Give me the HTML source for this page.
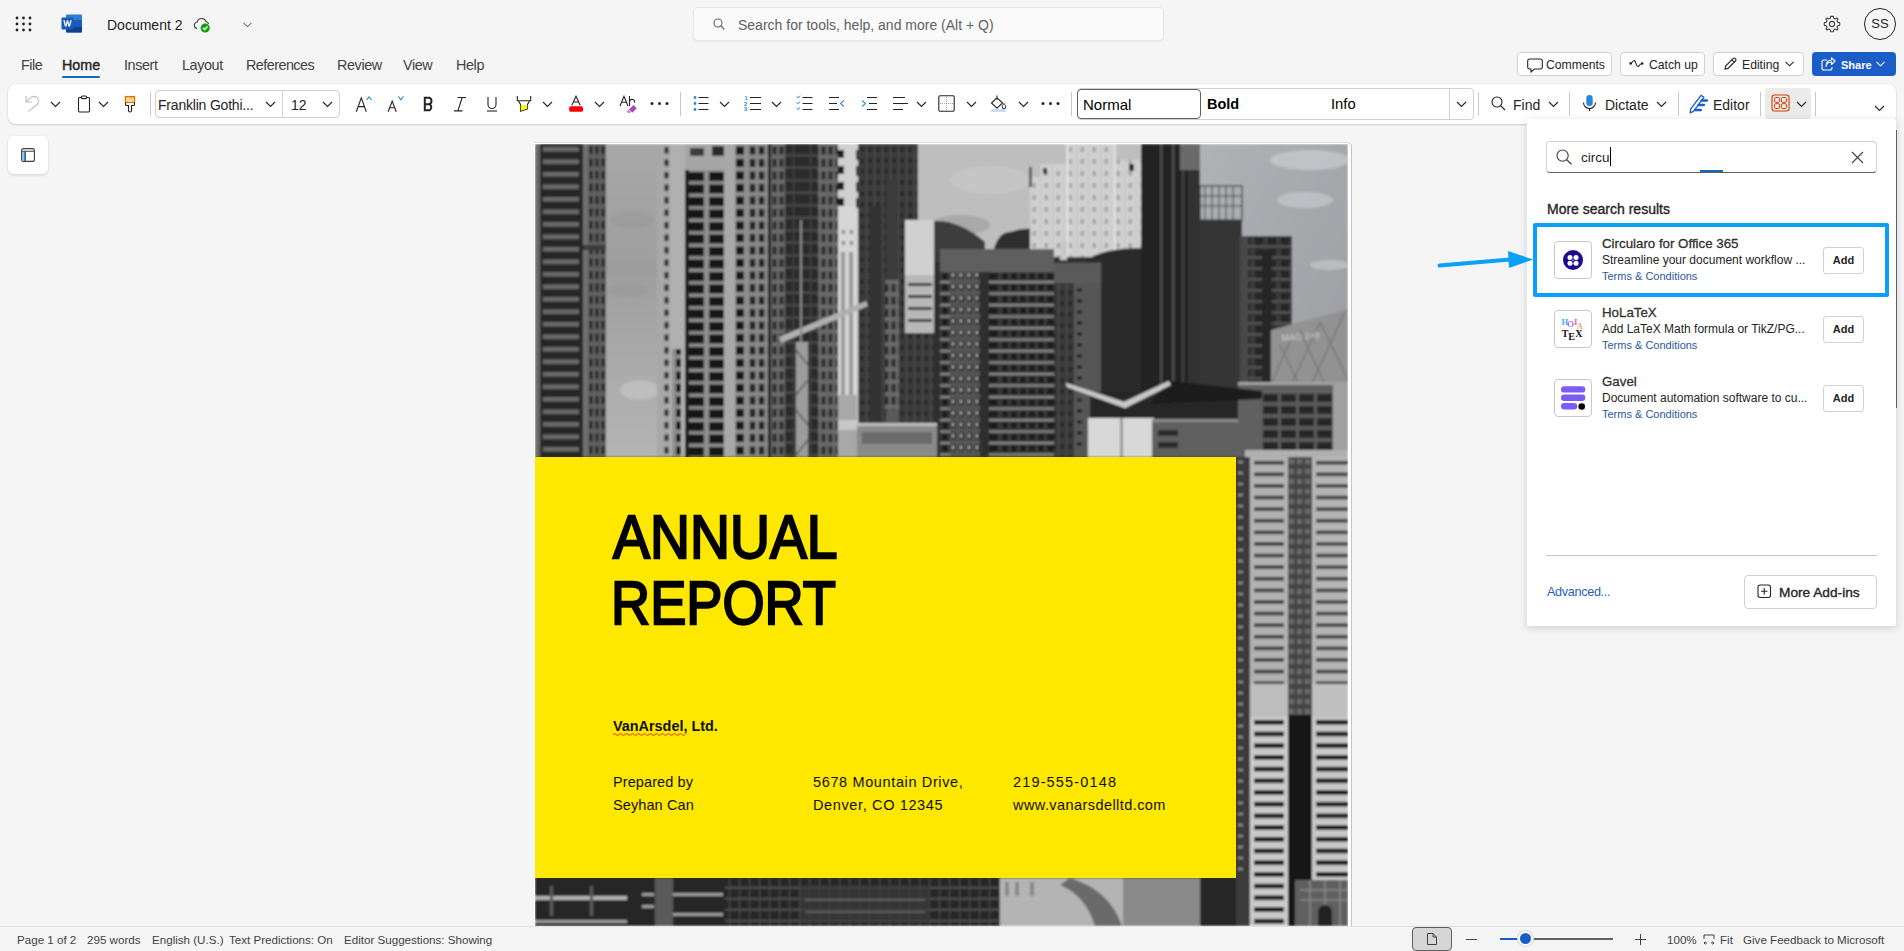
<!DOCTYPE html>
<html><head><meta charset="utf-8">
<style>
*{box-sizing:border-box;margin:0;padding:0}
html,body{width:1904px;height:951px;overflow:hidden;background:#f5f5f5;font-family:"Liberation Sans",sans-serif;color:#242424}
.a{position:absolute;white-space:nowrap}
svg{display:block}
.btn{position:absolute;border:1px solid #d1d1d1;border-radius:4px;background:#fff}
.chev{position:absolute}
</style></head><body>

<!-- ===== TITLE BAR ===== -->
<svg class="a" style="left:15px;top:16px" width="17" height="16" viewBox="0 0 17 16">
 <g fill="#242424">
  <circle cx="2" cy="2" r="1.4"/><circle cx="8.5" cy="2" r="1.4"/><circle cx="15" cy="2" r="1.4"/>
  <circle cx="2" cy="8" r="1.4"/><circle cx="8.5" cy="8" r="1.4"/><circle cx="15" cy="8" r="1.4"/>
  <circle cx="2" cy="14" r="1.4"/><circle cx="8.5" cy="14" r="1.4"/><circle cx="15" cy="14" r="1.4"/>
 </g>
</svg>
<svg class="a" style="left:61px;top:14px" width="22" height="19" viewBox="0 0 22 19">
 <rect x="5" y="0.5" width="16" height="18" rx="1" fill="#2b7cd3"/>
 <rect x="5" y="6" width="16" height="6.5" fill="#185abd"/>
 <rect x="5" y="12.5" width="16" height="6" rx="1" fill="#103f91"/>
 <rect x="0.5" y="3.5" width="12" height="12" rx="1" fill="#185abd"/>
 <path d="M2.3 6.3 L3.9 12.6 L5.6 12.6 L6.5 8.8 L7.4 12.6 L9.1 12.6 L10.7 6.3 L9.3 6.3 L8.2 10.8 L7.2 6.3 L5.8 6.3 L4.8 10.8 L3.7 6.3Z" fill="#fff"/>
</svg>
<div class="a" style="left:107px;top:17px;font-size:14px;line-height:17px">Document 2</div>
<svg class="a" style="left:193px;top:16px" width="18" height="17" viewBox="0 0 18 17">
 <path d="M4 12.5 A3.3 3.3 0 0 1 4.2 6 A4.6 4.6 0 0 1 13 5.5 A3 3 0 0 1 15.5 8" fill="none" stroke="#424242" stroke-width="1.1"/>
 <circle cx="12.2" cy="12" r="4.6" fill="#13a10e"/>
 <path d="M10 12 L11.6 13.5 L14.5 10.5" fill="none" stroke="#fff" stroke-width="1.3"/>
</svg>
<svg class="a" style="left:243px;top:22px" width="9" height="6" viewBox="0 0 9 6"><path d="M0.5 0.8 L4.5 4.8 L8.5 0.8" fill="none" stroke="#424242" stroke-width="1"/></svg>

<div class="a" style="left:694px;top:8px;width:469px;height:32px;background:#fafafa;border-radius:4px;box-shadow:0 0 0 1px #e6e6e6,0 1px 2px rgba(0,0,0,.12)"></div>
<svg class="a" style="left:713px;top:18px" width="12" height="12" viewBox="0 0 12 12"><circle cx="5" cy="5" r="4" fill="none" stroke="#616161" stroke-width="1.1"/><path d="M8 8 L11.3 11.3" stroke="#616161" stroke-width="1.2"/></svg>
<div class="a" style="left:738px;top:17px;font-size:14px;line-height:17px;color:#616161">Search for tools, help, and more (Alt + Q)</div>

<svg class="a" style="left:1823px;top:15px" width="18" height="18" viewBox="0 0 18 18">
 <path d="M9 1.2 L10.4 1.4 L10.8 3.3 L12.3 4 L13.9 2.9 L15.1 4.1 L14 5.7 L14.7 7.2 L16.6 7.6 L16.8 9 L16.6 10.4 L14.7 10.8 L14 12.3 L15.1 13.9 L13.9 15.1 L12.3 14 L10.8 14.7 L10.4 16.6 L9 16.8 L7.6 16.6 L7.2 14.7 L5.7 14 L4.1 15.1 L2.9 13.9 L4 12.3 L3.3 10.8 L1.4 10.4 L1.2 9 L1.4 7.6 L3.3 7.2 L4 5.7 L2.9 4.1 L4.1 2.9 L5.7 4 L7.2 3.3 L7.6 1.4Z" fill="none" stroke="#424242" stroke-width="1.1" stroke-linejoin="round"/>
 <circle cx="9" cy="9" r="2.6" fill="none" stroke="#424242" stroke-width="1.1"/>
</svg>
<div class="a" style="left:1864px;top:8px;width:32px;height:32px;border:1px solid #242424;border-radius:50%;font-size:13px;line-height:30px;text-align:center">SS</div>

<!-- ===== MENU ROW ===== -->
<div class="a" style="left:21px;top:57px;font-size:14.4px;line-height:16px;color:#424242;letter-spacing:-0.5px">File</div>
<div class="a" style="left:62px;top:57px;font-size:14.3px;line-height:16px;color:#242424;-webkit-text-stroke:0.4px #242424">Home</div>
<div class="a" style="left:62px;top:76px;width:38px;height:2px;background:#0f6cbd;border-radius:1px"></div>
<div class="a" style="left:124px;top:57px;font-size:14.4px;line-height:16px;color:#424242;letter-spacing:-0.4px">Insert</div>
<div class="a" style="left:182px;top:57px;font-size:14.4px;line-height:16px;color:#424242;letter-spacing:-0.4px">Layout</div>
<div class="a" style="left:246px;top:57px;font-size:14.4px;line-height:16px;color:#424242;letter-spacing:-0.55px">References</div>
<div class="a" style="left:337px;top:57px;font-size:14.4px;line-height:16px;color:#424242;letter-spacing:-0.4px">Review</div>
<div class="a" style="left:403px;top:57px;font-size:14.4px;line-height:16px;color:#424242;letter-spacing:-0.4px">View</div>
<div class="a" style="left:456px;top:57px;font-size:14.4px;line-height:16px;color:#424242;letter-spacing:-0.4px">Help</div>

<!-- top right buttons -->
<div class="btn" style="left:1517px;top:52px;width:95px;height:24px"></div>
<svg class="a" style="left:1527px;top:58px" width="16" height="15" viewBox="0 0 16 15"><path d="M2.5 1 H13.5 A1.8 1.8 0 0 1 15.3 2.8 V9.2 A1.8 1.8 0 0 1 13.5 11 H7.5 L4 14 V11 H2.5 A1.8 1.8 0 0 1 0.7 9.2 V2.8 A1.8 1.8 0 0 1 2.5 1Z" fill="none" stroke="#242424" stroke-width="1.1"/></svg>
<div class="a" style="left:1546px;top:58px;font-size:12.2px;line-height:15px">Comments</div>
<div class="btn" style="left:1620px;top:52px;width:85px;height:24px"></div>
<svg class="a" style="left:1629px;top:59px" width="15" height="10" viewBox="0 0 15 10"><path d="M1.5 4.5 C3 4.5 4 1 5.5 1.5 C7 2.5 7 8 9 7.5 C10.5 7 11 4.5 13.2 4.5" fill="none" stroke="#242424" stroke-width="1.1"/><circle cx="1.6" cy="4.5" r="1.3" fill="#242424"/><circle cx="13.2" cy="4.5" r="1.3" fill="#242424"/></svg>
<div class="a" style="left:1649px;top:58px;font-size:12.2px;line-height:15px">Catch up</div>
<div class="btn" style="left:1713px;top:52px;width:91px;height:24px"></div>
<svg class="a" style="left:1723px;top:57px" width="14" height="14" viewBox="0 0 14 14"><path d="M2 12 L2.6 9 L10 1.6 A1.4 1.4 0 0 1 12.4 4 L5 11.4 Z M8.8 2.8 L11.2 5.2" fill="none" stroke="#242424" stroke-width="1.1"/></svg>
<div class="a" style="left:1742px;top:58px;font-size:12.2px;line-height:15px">Editing</div>
<svg class="a" style="left:1785px;top:61px" width="9" height="6" viewBox="0 0 9 6"><path d="M0.5 0.8 L4.5 4.8 L8.5 0.8" fill="none" stroke="#242424" stroke-width="1.1"/></svg>
<div class="a" style="left:1812px;top:52px;width:84px;height:24px;background:#0f5cc0;border-radius:4px;background:#1a5dc7"></div>
<svg class="a" style="left:1821px;top:57px" width="15" height="14" viewBox="0 0 15 14"><path d="M6 3 H3 A2 2 0 0 0 1 5 V11 A2 2 0 0 0 3 13 H9 A2 2 0 0 0 11 11 V10" fill="none" stroke="#fff" stroke-width="1.1"/><path d="M5 9.5 C5.5 6.5 7.5 5 10.5 5 V7.5 L14 4 L10.5 0.8 V3 C7 3 5 5.5 5 9.5Z" fill="none" stroke="#fff" stroke-width="1.1" stroke-linejoin="round"/></svg>
<div class="a" style="left:1841px;top:58px;font-size:11px;line-height:15px;color:#fff;font-weight:bold">Share</div>
<svg class="a" style="left:1876px;top:61px" width="9" height="6" viewBox="0 0 9 6"><path d="M0.5 0.8 L4.5 4.8 L8.5 0.8" fill="none" stroke="#fff" stroke-width="1.1"/></svg>

<!-- ===== RIBBON ===== -->
<div class="a" style="left:8px;top:84px;width:1888px;height:40px;background:#fff;border-radius:8px;box-shadow:0 1px 2px rgba(0,0,0,.14),0 0 2px rgba(0,0,0,.10)"></div>
<!-- undo/clipboard/brush -->
<svg class="a" style="left:25px;top:95px" width="15" height="18" viewBox="0 0 15 18"><path d="M1 1 V7 H7" fill="none" stroke="#bdbdbd" stroke-width="1.1"/><path d="M1.3 6.7 L5.5 2.8 A4.6 4.6 0 0 1 12.3 9.3 L3.2 16.6" fill="none" stroke="#bdbdbd" stroke-width="1.1"/></svg>
<svg class="a" style="left:50px;top:101px" width="11" height="7" viewBox="0 0 11 7"><path d="M1 1 L5.5 5.5 L10 1" fill="none" stroke="#242424" stroke-width="1.1"/></svg>
<svg class="a" style="left:77px;top:95px" width="14" height="18" viewBox="0 0 14 18"><rect x="1.5" y="2.5" width="11" height="14.5" rx="1.3" fill="none" stroke="#242424" stroke-width="1.1"/><rect x="4.3" y="1" width="5.4" height="2.6" rx="1.3" fill="#fff" stroke="#242424" stroke-width="1.1"/></svg>
<svg class="a" style="left:98px;top:101px" width="11" height="7" viewBox="0 0 11 7"><path d="M1 1 L5.5 5.5 L10 1" fill="none" stroke="#242424" stroke-width="1.1"/></svg>
<svg class="a" style="left:124px;top:95px" width="12" height="18" viewBox="0 0 12 18"><rect x="1.5" y="1.5" width="9" height="6" fill="#f8dc98" stroke="#e86c00" stroke-width="1.2"/><path d="M7 1.5 V3.5 M9 1.5 V3" stroke="#e86c00" stroke-width="0.9"/><path d="M1.5 7.5 V9.5 A1 1 0 0 0 2.5 10.5 H4.5 V15.5 A1.5 1.5 0 0 0 7.5 15.5 V10.5 H9.5 A1 1 0 0 0 10.5 9.5 V7.5" fill="none" stroke="#242424" stroke-width="1.1"/></svg>
<div class="a" style="left:150px;top:92px;width:1px;height:24px;background:#c8c8c8"></div>
<!-- font box -->
<div class="a" style="left:155px;top:90px;width:185px;height:28px;border:1px solid #d1d1d1;border-radius:4px"></div>
<div class="a" style="left:282px;top:91px;width:1px;height:26px;background:#d1d1d1"></div>
<div class="a" style="left:158px;top:97px;font-size:14px;line-height:17px;color:#242424;letter-spacing:-0.2px">Franklin Gothi...</div>
<svg class="a" style="left:265px;top:101px" width="11" height="7" viewBox="0 0 11 7"><path d="M1 1 L5.5 5.5 L10 1" fill="none" stroke="#242424" stroke-width="1.1"/></svg>
<div class="a" style="left:291px;top:97px;font-size:14px;line-height:17px;color:#242424">12</div>
<svg class="a" style="left:322px;top:101px" width="11" height="7" viewBox="0 0 11 7"><path d="M1 1 L5.5 5.5 L10 1" fill="none" stroke="#242424" stroke-width="1.1"/></svg>
<!-- grow/shrink/B/I/U -->
<svg class="a" style="left:355px;top:95px" width="18" height="18" viewBox="0 0 18 18"><path d="M1.3 16.7 L6.3 2.8 L11.3 16.7 M3.2 11.6 H9.4" fill="none" stroke="#242424" stroke-width="1.1"/><path d="M11.5 5 L14 1.8 L16.6 5" fill="none" stroke="#2886de" stroke-width="1.1"/></svg>
<svg class="a" style="left:387px;top:95px" width="18" height="18" viewBox="0 0 18 18"><path d="M1.2 16.7 L5.2 6 L9.2 16.7 M2.6 12.7 H7.8" fill="none" stroke="#242424" stroke-width="1.1"/><path d="M11.3 1.2 L13.8 4.8 L16.4 1.2" fill="none" stroke="#2886de" stroke-width="1.1"/></svg>
<svg class="a" style="left:423px;top:96px" width="11" height="16" viewBox="0 0 11 16"><path d="M1.8 1.8 H6 A3.3 3.3 0 0 1 6 8.2 H1.8 Z M1.8 8.2 H6.6 A3.6 3.6 0 0 1 6.6 14.3 H1.8 Z" fill="none" stroke="#242424" stroke-width="2"/></svg>
<svg class="a" style="left:453px;top:96px" width="14" height="16" viewBox="0 0 14 16"><path d="M4.5 1.5 H13 M1 14.9 H9.5 M9.2 1.5 L4.9 14.9" fill="none" stroke="#242424" stroke-width="1.1"/></svg>
<svg class="a" style="left:486px;top:96px" width="12" height="16" viewBox="0 0 12 16"><path d="M2 1 V8.5 A4 4 0 0 0 10 8.5 V1" fill="none" stroke="#242424" stroke-width="1.1"/><path d="M1 15 H11" stroke="#242424" stroke-width="1.1"/></svg>
<!-- highlight / font color / clear -->
<svg class="a" style="left:516px;top:95px" width="16" height="18" viewBox="0 0 16 18"><path d="M1.3 1 V5.8 H14.7 V1" fill="none" stroke="#242424" stroke-width="1.1"/><path d="M2.5 6 L4.5 9.5 V16.3 L11.5 13.8 V9.5 L13.5 6" fill="none" stroke="#242424" stroke-width="1.1"/><path d="M4.8 10 H11.2 V13.5 L4.8 15.8Z" fill="#ffff00"/></svg>
<svg class="a" style="left:542px;top:101px" width="11" height="7" viewBox="0 0 11 7"><path d="M1 1 L5.5 5.5 L10 1" fill="none" stroke="#242424" stroke-width="1.1"/></svg>
<svg class="a" style="left:568px;top:95px" width="16" height="18" viewBox="0 0 16 18"><path d="M3.8 10.3 L8 1.2 L12.2 10.3 M5.4 7 H10.6" fill="none" stroke="#242424" stroke-width="1.1"/><rect x="1.2" y="11.2" width="13.8" height="5.6" rx="1.6" fill="#f00"/></svg>
<svg class="a" style="left:594px;top:101px" width="11" height="7" viewBox="0 0 11 7"><path d="M1 1 L5.5 5.5 L10 1" fill="none" stroke="#242424" stroke-width="1.1"/></svg>
<svg class="a" style="left:619px;top:95px" width="19" height="19" viewBox="0 0 19 19"><path d="M1 11 L5 1.3 L9 11 M2.5 7.3 H7.5 M10.5 1 V11 M10.5 7.2 A2.6 2.6 0 1 1 15.6 7.6" fill="none" stroke="#242424" stroke-width="1.1"/><path d="M10 14.5 L14.5 10 L17.8 13.2 L13.3 17.7Z" fill="#a646c1"/><path d="M7.5 16.5 L9.5 14.5 L12 17 L11 18 H8.8Z" fill="#c58ed5" /></svg>
<svg class="a" style="left:650px;top:101px" width="19" height="5" viewBox="0 0 19 5"><circle cx="2" cy="2.5" r="1.5" fill="#242424"/><circle cx="9.5" cy="2.5" r="1.5" fill="#242424"/><circle cx="17" cy="2.5" r="1.5" fill="#242424"/></svg>
<div class="a" style="left:680px;top:92px;width:1px;height:24px;background:#c8c8c8"></div>
<!-- lists -->
<svg class="a" style="left:693px;top:95px" width="17" height="16" viewBox="0 0 17 16"><g fill="#2886de"><circle cx="2" cy="2.5" r="1.4"/><circle cx="2" cy="8.5" r="1.4"/><circle cx="2" cy="14.5" r="1.4"/></g><path d="M5.5 2.5 H15.5 M5.5 8.5 H15.5 M5.5 14.5 H15.5" stroke="#242424" stroke-width="1"/></svg>
<svg class="a" style="left:719px;top:101px" width="11" height="7" viewBox="0 0 11 7"><path d="M1 1 L5.5 5.5 L10 1" fill="none" stroke="#242424" stroke-width="1.1"/></svg>
<svg class="a" style="left:744px;top:95px" width="18" height="17" viewBox="0 0 18 17"><text x="0.5" y="5" font-size="5.5" font-family="Liberation Sans" font-weight="bold" fill="#2886de">1</text><text x="0" y="10.7" font-size="5.5" font-family="Liberation Sans" font-weight="bold" fill="#2886de">2</text><text x="0" y="16.4" font-size="5.5" font-family="Liberation Sans" font-weight="bold" fill="#2886de">3</text><path d="M6 2.5 H17 M6 8.5 H17 M6 14.5 H17" stroke="#242424" stroke-width="1"/></svg>
<svg class="a" style="left:771px;top:101px" width="11" height="7" viewBox="0 0 11 7"><path d="M1 1 L5.5 5.5 L10 1" fill="none" stroke="#242424" stroke-width="1.1"/></svg>
<svg class="a" style="left:796px;top:95px" width="17" height="16" viewBox="0 0 17 16"><path d="M0.8 1.5 L2 3 L4 0.6 M0.8 7.3 L2 8.8 L4 6.4 M0.8 13.1 L2 14.6 L4 12.2" fill="none" stroke="#2886de" stroke-width="1"/><path d="M6.5 2.5 H16.5 M6.5 8.5 H16.5 M6.5 14.5 H16.5" stroke="#242424" stroke-width="1"/></svg>
<svg class="a" style="left:828px;top:95px" width="17" height="16" viewBox="0 0 17 16"><path d="M1 2.5 H11 M1 8.5 H9 M1 14.5 H11" stroke="#242424" stroke-width="1"/><path d="M16 5.3 L12.5 8.5 L16 11.7" fill="none" stroke="#2886de" stroke-width="1.1"/></svg>
<svg class="a" style="left:861px;top:95px" width="17" height="16" viewBox="0 0 17 16"><path d="M6 2.5 H16 M8 8.5 H16 M6 14.5 H16" stroke="#242424" stroke-width="1"/><path d="M1 5.3 L4.5 8.5 L1 11.7" fill="none" stroke="#2886de" stroke-width="1.1"/></svg>
<svg class="a" style="left:892px;top:95px" width="17" height="16" viewBox="0 0 17 16"><path d="M1 2.5 H13 M1 8.5 H16 M1 14.5 H11" stroke="#242424" stroke-width="1"/></svg>
<svg class="a" style="left:916px;top:101px" width="11" height="7" viewBox="0 0 11 7"><path d="M1 1 L5.5 5.5 L10 1" fill="none" stroke="#242424" stroke-width="1.1"/></svg>
<svg class="a" style="left:938px;top:95px" width="17" height="17" viewBox="0 0 17 17"><rect x="0.8" y="0.8" width="15.4" height="15.4" rx="1.2" fill="none" stroke="#242424" stroke-width="1.1"/><path d="M8.5 2 V15 M2 8.5 H15" stroke="#8a8a8a" stroke-width="0.8" stroke-dasharray="1 1"/></svg>
<svg class="a" style="left:966px;top:101px" width="11" height="7" viewBox="0 0 11 7"><path d="M1 1 L5.5 5.5 L10 1" fill="none" stroke="#242424" stroke-width="1.1"/></svg>
<svg class="a" style="left:990px;top:95px" width="17" height="17" viewBox="0 0 17 17"><path d="M7 0.5 V4.5 M1.5 8 L7 2.8 L12.5 8 L7 13.2Z" fill="none" stroke="#242424" stroke-width="1.1" stroke-linejoin="round"/><path d="M14 8.5 C13 10 12.2 11 12.2 12 A1.8 1.8 0 0 0 15.8 12 C15.8 11 15 10 14 8.5Z" fill="none" stroke="#242424" stroke-width="1"/><rect x="1" y="14" width="15" height="3" rx="1.5" fill="#c6d9f5"/></svg>
<svg class="a" style="left:1018px;top:101px" width="11" height="7" viewBox="0 0 11 7"><path d="M1 1 L5.5 5.5 L10 1" fill="none" stroke="#242424" stroke-width="1.1"/></svg>
<svg class="a" style="left:1041px;top:101px" width="19" height="5" viewBox="0 0 19 5"><circle cx="2" cy="2.5" r="1.5" fill="#242424"/><circle cx="9.5" cy="2.5" r="1.5" fill="#242424"/><circle cx="17" cy="2.5" r="1.5" fill="#242424"/></svg>
<div class="a" style="left:1071px;top:92px;width:1px;height:24px;background:#c8c8c8"></div>
<!-- styles gallery -->
<div class="a" style="left:1077px;top:88px;width:397px;height:32px;border:1px solid #d1d1d1;border-radius:4px"></div>
<div class="a" style="left:1077px;top:89px;width:124px;height:30px;border:1px solid #616161;border-radius:4px;background:#fff"></div>
<div class="a" style="left:1449px;top:89px;width:1px;height:30px;background:#d1d1d1"></div>
<div class="a" style="left:1083px;top:96px;font-size:15px;line-height:17px;color:#000">Normal</div>
<div class="a" style="left:1207px;top:96px;font-size:14.5px;line-height:17px;color:#000;font-weight:bold">Bold</div>
<div class="a" style="left:1331px;top:96px;font-size:14.8px;line-height:17px;color:#000">Info</div>
<svg class="a" style="left:1456px;top:101px" width="11" height="7" viewBox="0 0 11 7"><path d="M1 1 L5.5 5.5 L10 1" fill="none" stroke="#242424" stroke-width="1.1"/></svg>
<div class="a" style="left:1478px;top:92px;width:1px;height:24px;background:#c8c8c8"></div>
<!-- find / dictate / editor / addins -->
<svg class="a" style="left:1491px;top:96px" width="15" height="15" viewBox="0 0 15 15"><circle cx="6" cy="6" r="5" fill="none" stroke="#242424" stroke-width="1.1"/><path d="M9.6 9.6 L14 14" stroke="#242424" stroke-width="1.2"/></svg>
<div class="a" style="left:1513px;top:97px;font-size:14px;line-height:17px;color:#242424">Find</div>
<svg class="a" style="left:1548px;top:101px" width="11" height="7" viewBox="0 0 11 7"><path d="M1 1 L5.5 5.5 L10 1" fill="none" stroke="#242424" stroke-width="1.1"/></svg>
<div class="a" style="left:1569px;top:92px;width:1px;height:24px;background:#c8c8c8"></div>
<svg class="a" style="left:1582px;top:94px" width="15" height="18" viewBox="0 0 15 18"><rect x="4.3" y="1" width="6.4" height="11" rx="3.2" fill="#2886de"/><path d="M1.5 8.5 A6 6 0 0 0 13.5 8.5 M7.5 14.5 V17" fill="none" stroke="#242424" stroke-width="1.1"/></svg>
<div class="a" style="left:1605px;top:97px;font-size:14px;line-height:17px;color:#242424">Dictate</div>
<svg class="a" style="left:1656px;top:101px" width="11" height="7" viewBox="0 0 11 7"><path d="M1 1 L5.5 5.5 L10 1" fill="none" stroke="#242424" stroke-width="1.1"/></svg>
<div class="a" style="left:1678px;top:92px;width:1px;height:24px;background:#c8c8c8"></div>
<svg class="a" style="left:1688px;top:94px" width="21" height="20" viewBox="0 0 21 20"><path d="M2.2 18.8 L2.6 15.2 L13 1.3 L15.9 3.4 L5.5 17.3 Z" fill="none" stroke="#1a5dc7" stroke-width="1.3" stroke-linejoin="round"/><path d="M13.5 6.6 H18.8 M10.5 11.1 H15.8 M7 16.1 H12.8" stroke="#1a5dc7" stroke-width="2.5" stroke-linecap="round"/></svg>
<div class="a" style="left:1713px;top:97px;font-size:14px;line-height:17px;color:#242424">Editor</div>
<div class="a" style="left:1760px;top:92px;width:1px;height:24px;background:#c8c8c8"></div>
<div class="a" style="left:1765px;top:88px;width:46px;height:31px;background:#ebebeb;border-radius:4px"></div>
<svg class="a" style="left:1771px;top:94px" width="19" height="18" viewBox="0 0 19 18"><rect x="1" y="1" width="17" height="16" rx="2.5" fill="none" stroke="#d83b01" stroke-width="1.1"/><rect x="3.6" y="3.5" width="5" height="4.8" rx="1" fill="none" stroke="#d83b01" stroke-width="1"/><rect x="10.4" y="3.5" width="5" height="4.8" rx="1" fill="none" stroke="#d83b01" stroke-width="1"/><rect x="3.6" y="9.7" width="5" height="4.8" rx="1" fill="none" stroke="#d83b01" stroke-width="1"/><rect x="10.4" y="9.7" width="5" height="4.8" rx="1" fill="none" stroke="#d83b01" stroke-width="1"/></svg>
<svg class="a" style="left:1796px;top:101px" width="11" height="7" viewBox="0 0 11 7"><path d="M1 1 L5.5 5.5 L10 1" fill="none" stroke="#242424" stroke-width="1.1"/></svg>
<div class="a" style="left:1815px;top:92px;width:1px;height:24px;background:#c8c8c8"></div>
<svg class="a" style="left:1874px;top:105px" width="11" height="7" viewBox="0 0 11 7"><path d="M1 1 L5.5 5.5 L10 1" fill="none" stroke="#242424" stroke-width="1.1"/></svg>


<!-- left nav button -->
<div class="a" style="left:8px;top:136px;width:40px;height:38px;background:#fff;border-radius:6px;box-shadow:0 1px 3px rgba(0,0,0,.14)"></div>
<svg class="a" style="left:21px;top:148px" width="14" height="14" viewBox="0 0 14 14"><rect x="0.6" y="0.6" width="12.8" height="12.8" rx="2" fill="none" stroke="#424242" stroke-width="1.1"/><rect x="1" y="3.5" width="3" height="9.5" fill="#8ec1f3"/><path d="M0.6 3.3 H13.4 M4.2 3.3 V13.4" stroke="#424242" stroke-width="1.1"/><path d="M4.2 3.8 V13" stroke="#0f6cbd" stroke-width="1.1"/></svg>

<!-- ===== PAGE ===== -->
<div class="a" style="left:534px;top:143px;width:817px;height:790px;background:#fff;border-radius:0 4px 0 0;box-shadow:1px 0 0 #c4c4c4,0 -1px 0 #dcdcdc"></div>
<svg class="a" style="left:535px;top:144px" width="813" height="782" viewBox="535 144 813 782">
<defs>
 <pattern id="pA" x="539" y="144" width="44" height="12.5" patternUnits="userSpaceOnUse"><rect width="44" height="12.5" fill="#262626"/><rect x="4" y="3" width="36" height="4.5" fill="#6a6a6a"/></pattern>
 <pattern id="pA2" x="588" y="144" width="6" height="12.5" patternUnits="userSpaceOnUse"><rect width="6" height="12.5" fill="#606060"/><rect x="1.5" y="2" width="3" height="8" fill="#222"/></pattern>
 <pattern id="pB1" x="657" y="144" width="13" height="12.5" patternUnits="userSpaceOnUse"><rect width="13" height="12.5" fill="#a8a8a8"/><rect x="7.5" y="3" width="4" height="6.5" fill="#2a2a2a"/></pattern>
 <pattern id="pB2" x="685" y="170" width="39" height="12.5" patternUnits="userSpaceOnUse"><rect width="39" height="12.5" fill="#8e8e8e"/><rect x="1" y="2" width="18" height="9" fill="#161616"/><rect x="24" y="2" width="15" height="9" fill="#161616"/></pattern>
 <pattern id="pB3" x="735" y="144" width="12" height="12.5" patternUnits="userSpaceOnUse"><rect width="12" height="12.5" fill="#909090"/><rect x="1" y="2.5" width="8" height="8" fill="#151515"/></pattern>
 <pattern id="pB4" x="748" y="144" width="9" height="12.5" patternUnits="userSpaceOnUse"><rect width="9" height="12.5" fill="#8a8a8a"/><rect x="1.8" y="2.5" width="5.5" height="8" fill="#222"/></pattern>
 <pattern id="pB5" x="771" y="144" width="7" height="12.5" patternUnits="userSpaceOnUse"><rect width="7" height="12.5" fill="#6a6a6a"/><rect x="1.5" y="2.5" width="4" height="8" fill="#2a2a2a"/></pattern>
 <pattern id="pB6" x="785" y="144" width="17" height="12.5" patternUnits="userSpaceOnUse"><rect width="17" height="12.5" fill="#2c2c2c"/><rect y="10.5" width="17" height="1.5" fill="#555"/><rect x="8" width="1.3" height="12.5" fill="#444"/></pattern>
 <pattern id="pD" x="858" y="144" width="8" height="11" patternUnits="userSpaceOnUse"><rect width="8" height="11" fill="#3a3a3a"/><rect x="0" y="0" width="1.5" height="11" fill="#4a4a4a"/><rect x="2" y="3" width="4" height="5" fill="#2a2a2a"/></pattern>
 <pattern id="pF" x="1029" y="144" width="12" height="12" patternUnits="userSpaceOnUse"><rect width="12" height="12" fill="#d0d0d0"/><rect x="3.5" y="3" width="3.5" height="5" fill="#a6a6a6"/><rect x="11" y="0" width="1" height="12" fill="#c4c4c4"/></pattern>
 <pattern id="pG" x="940" y="258" width="60" height="11.5" patternUnits="userSpaceOnUse"><rect width="60" height="11.5" fill="#3a3a3a"/><rect y="0" width="60" height="2.2" fill="#8a8a8a"/><rect x="2" y="3.5" width="6" height="6" fill="#1c1c1c"/><rect x="11" y="3.5" width="6" height="6" fill="#1c1c1c"/><rect x="20" y="3.5" width="6" height="6" fill="#1c1c1c"/><rect x="29" y="3.5" width="6" height="6" fill="#1c1c1c"/><rect x="38" y="3.5" width="6" height="6" fill="#1c1c1c"/><rect x="47" y="3.5" width="11" height="6" fill="#1c1c1c"/></pattern>
 <pattern id="pG2" x="950" y="258" width="8" height="11.5" patternUnits="userSpaceOnUse"><rect width="8" height="11.5" fill="#555"/><rect x="1" y="3" width="5" height="6" fill="#2a2a2a"/><rect x="2" y="4" width="2" height="3" fill="#bbb"/></pattern>
 <pattern id="pL" x="1240" y="236" width="13" height="11" patternUnits="userSpaceOnUse"><rect width="13" height="11" fill="#3a3a3a"/><rect x="2" y="2" width="8" height="7" fill="#262626"/><rect y="9.5" width="13" height="1.2" fill="#666"/></pattern>
 <pattern id="pS1" x="1250" y="457" width="38" height="11.6" patternUnits="userSpaceOnUse"><rect width="38" height="11.6" fill="#b2b2b2"/><rect x="4" y="4" width="30" height="3.5" fill="#3a3a3a"/></pattern>
 <pattern id="pS2" x="1250" y="717" width="38" height="11.7" patternUnits="userSpaceOnUse"><rect width="38" height="11.7" fill="#cacaca"/><rect x="4" y="3" width="30" height="4.5" fill="#151515"/></pattern>
 <pattern id="pS3" x="1312" y="457" width="40" height="11.6" patternUnits="userSpaceOnUse"><rect width="40" height="11.6" fill="#b5b5b5"/><rect x="4" y="4" width="34" height="3.5" fill="#3f3f3f"/></pattern>
 <pattern id="pS4" x="1312" y="717" width="40" height="11.7" patternUnits="userSpaceOnUse"><rect width="40" height="11.7" fill="#c8c8c8"/><rect x="4" y="3" width="34" height="4.5" fill="#161616"/></pattern>
 <pattern id="pK" x="1288" y="457" width="8" height="10" patternUnits="userSpaceOnUse"><rect width="8" height="10" fill="#454545"/><rect x="1" y="2" width="5" height="5" fill="#6a6a6a"/></pattern>
 <pattern id="pN" x="1262" y="392" width="18" height="12" patternUnits="userSpaceOnUse"><rect width="18" height="12" fill="#5a5a5a"/><rect x="1" y="2" width="15" height="8" fill="#262626"/></pattern>
 <pattern id="pBot" x="725" y="878" width="10" height="11" patternUnits="userSpaceOnUse"><rect width="10" height="11" fill="#262626"/><rect x="0" y="9" width="10" height="1.5" fill="#5a5a5a"/><rect x="4" y="0" width="1.2" height="11" fill="#4a4a4a"/></pattern>
 <linearGradient id="sky1" x1="0" y1="0" x2="0" y2="1"><stop offset="0" stop-color="#a8a8a8"/><stop offset=".4" stop-color="#9e9e9e"/><stop offset=".75" stop-color="#acacac"/><stop offset="1" stop-color="#b4b4b4"/></linearGradient>
 <linearGradient id="sky3" x1="0" y1="0" x2="1" y2="1"><stop offset="0" stop-color="#b0b2b6"/><stop offset="1" stop-color="#9c9ea2"/></linearGradient>
</defs>
<filter id="soft" x="0" y="0" width="1" height="1"><feGaussianBlur stdDeviation="1.2"/></filter><g filter="url(#soft)"><rect x="535" y="144" width="813" height="782" fill="#333"/>

<!-- ===== TOP STRIP ===== -->
<!-- sky areas -->
<rect x="606" y="144" width="51" height="313" fill="url(#sky1)"/>
<ellipse cx="632" cy="220" rx="22" ry="8" fill="#9a9a9a" opacity=".6"/>
<ellipse cx="628" cy="290" rx="20" ry="7" fill="#9a9a9a" opacity=".6"/>
<ellipse cx="640" cy="390" rx="20" ry="10" fill="#c4c4c4" opacity=".7"/>
<rect x="905" y="144" width="295" height="110" fill="#bebebe"/>
<ellipse cx="990" cy="180" rx="40" ry="14" fill="#c8c8c8" opacity=".7"/>
<ellipse cx="960" cy="225" rx="30" ry="10" fill="#a0a0a0" opacity=".7"/>
<rect x="1200" y="144" width="148" height="240" fill="url(#sky3)"/>
<ellipse cx="1310" cy="160" rx="40" ry="10" fill="#c6c8cc" opacity=".8"/>
<ellipse cx="1305" cy="200" rx="28" ry="8" fill="#c2c4c8" opacity=".8"/>
<ellipse cx="1330" cy="265" rx="20" ry="5" fill="#c0c2c6" opacity=".8"/>

<!-- Building A -->
<rect x="535" y="144" width="71" height="313" fill="#2e2e2e"/>
<rect x="535" y="144" width="5" height="313" fill="#6a6a6a"/>
<rect x="540" y="144" width="43" height="313" fill="url(#pA)"/>
<rect x="583" y="144" width="5" height="313" fill="#707070"/>
<rect x="588" y="144" width="18" height="313" fill="url(#pA2)"/>
<rect x="583" y="245" width="23" height="5" fill="#3a3a3a"/>

<!-- Building B -->
<rect x="657" y="144" width="181" height="313" fill="#707070"/>
<rect x="657" y="144" width="13" height="313" fill="url(#pB1)"/>
<rect x="670" y="144" width="15" height="313" fill="#b0b0b0"/>
<rect x="672" y="349" width="9" height="108" fill="url(#pB3)"/>
<rect x="685" y="144" width="50" height="26" fill="#a6a6a6"/>
<rect x="690" y="148" width="14" height="8" fill="#3a3a3a"/><rect x="712" y="146" width="18" height="10" fill="#2a2a2a"/>
<rect x="685" y="170" width="39" height="287" fill="url(#pB2)"/>
<rect x="685" y="170" width="4" height="287" fill="#1e1e1e"/>
<rect x="724" y="144" width="11" height="313" fill="#a8a8a8"/>
<rect x="735" y="144" width="13" height="313" fill="url(#pB3)"/>
<rect x="748" y="144" width="20" height="313" fill="url(#pB4)"/>
<rect x="768" y="144" width="3" height="313" fill="#1e1e1e"/>
<rect x="771" y="144" width="14" height="313" fill="url(#pB5)"/>
<rect x="785" y="144" width="33" height="313" fill="url(#pB6)"/>
<rect x="818" y="144" width="20" height="313" fill="url(#pB5)"/>
<!-- Building C (white) -->
<rect x="838" y="144" width="20" height="313" fill="#d6d6d6"/>
<rect x="838" y="144" width="32" height="62" fill="#cfcfcf"/>
<rect x="838" y="150" width="6" height="8" fill="#1e1e1e"/><rect x="856" y="150" width="13" height="10" fill="#1e1e1e"/>
<rect x="838" y="166" width="6" height="8" fill="#1e1e1e"/><rect x="856" y="166" width="13" height="10" fill="#1e1e1e"/>
<rect x="838" y="182" width="6" height="8" fill="#1e1e1e"/><rect x="856" y="182" width="13" height="10" fill="#1e1e1e"/>
<rect x="838" y="198" width="6" height="8" fill="#1e1e1e"/><rect x="856" y="198" width="13" height="10" fill="#1e1e1e"/>
<rect x="842" y="230" width="3" height="4" fill="#8a8a8a"/><rect x="850" y="230" width="3" height="4" fill="#8a8a8a"/>
<rect x="842" y="241" width="3" height="4" fill="#8a8a8a"/><rect x="850" y="241" width="3" height="4" fill="#8a8a8a"/>
<rect x="841" y="252" width="4" height="150" fill="#9a9a9a"/><rect x="849" y="252" width="4" height="150" fill="#9a9a9a"/>
<rect x="838" y="395" width="19" height="62" fill="#a8a8a8"/>
<rect x="838" y="420" width="19" height="10" fill="#c8c8c8"/>

<!-- Building D (dark textured) -->
<rect x="858" y="144" width="60" height="313" fill="url(#pD)"/>
<rect x="870" y="206" width="12" height="215" fill="#303030"/>
<rect x="886" y="180" width="12" height="245" fill="#5a5a5a"/>
<rect x="886" y="180" width="12" height="100" fill="#3a3a3a"/>
<rect x="885" y="280" width="14" height="130" fill="url(#pB5)"/>
<!-- E white with balconies -->
<rect x="905" y="220" width="29" height="55" fill="#d0d0d0"/>
<rect x="905" y="275" width="29" height="58" fill="#b8b8b8"/>
<rect x="908" y="283" width="24" height="3" fill="#3a3a3a"/><rect x="908" y="295" width="24" height="3" fill="#3a3a3a"/><rect x="908" y="307" width="24" height="3" fill="#3a3a3a"/><rect x="908" y="319" width="24" height="3" fill="#3a3a3a"/>
<rect x="905" y="333" width="30" height="90" fill="url(#pD)"/>
<rect x="934" y="222" width="16" height="235" fill="#2e2e2e"/>
<rect x="934" y="222" width="16" height="40" fill="#3a3a3a"/>
<rect x="857" y="423" width="80" height="34" fill="#8a8a8a"/>
<rect x="857" y="423" width="80" height="3" fill="#bdbdbd"/>
<rect x="862" y="432" width="70" height="12" fill="#6a6a6a"/>

<!-- crane -->
<path d="M779 337 L866 301 L868 306 L781 343Z" fill="#b0b0b0"/>
<rect x="796" y="342" width="12" height="115" fill="#9c9c9c"/>
<path d="M796 350 L808 365 M808 380 L796 395 M796 410 L808 425 M808 440 L796 455" stroke="#5a5a5a" stroke-width="1.5"/>
<rect x="800" y="220" width="2" height="122" fill="#888"/>

<!-- right zone: hill, trees -->
<path d="M934 252 L934 221 Q960 220 985 242 L985 252Z" fill="#3c3c3c"/>
<path d="M993 252 Q998 232 1010 232 Q1030 225 1060 232 L1060 258 L993 258Z" fill="#2e2e2e"/>
<!-- F white building -->
<rect x="1030" y="177" width="111" height="80" fill="url(#pF)"/>
<rect x="1040" y="164" width="26" height="14" fill="url(#pF)"/>
<rect x="1115" y="160" width="26" height="20" fill="url(#pF)"/>
<rect x="1066" y="144" width="49" height="113" fill="url(#pF)"/>
<rect x="1066" y="144" width="3" height="113" fill="#dedede"/><rect x="1113" y="144" width="3" height="113" fill="#dedede"/>
<rect x="1043" y="168" width="4" height="6" fill="#2a2a2a"/><rect x="1129" y="164" width="5" height="7" fill="#2a2a2a"/>
<rect x="1029" y="167" width="3" height="20" fill="#5a5a5a"/>
<rect x="1060" y="240" width="7" height="20" fill="#c8c8c8"/>
<!-- G -->
<rect x="940" y="251" width="114" height="206" fill="url(#pG)"/>
<rect x="940" y="249" width="114" height="23" fill="#5e5e5e"/>
<rect x="950" y="272" width="30" height="185" fill="url(#pG2)"/>
<rect x="980" y="272" width="9" height="185" fill="#2e2e2e"/>
<!-- H, I -->
<rect x="1054" y="262" width="47" height="195" fill="url(#pD)"/>
<rect x="1054" y="263" width="47" height="20" fill="#5a5a5a"/>
<rect x="1074" y="283" width="27" height="174" fill="#565656"/>
<path d="M1077 290 h5 M1077 301 h5 M1077 312 h5 M1077 323 h5 M1077 334 h5 M1077 345 h5 M1077 356 h5 M1077 367 h5 M1077 378 h5 M1077 389 h5 M1077 400 h5 M1077 411 h5 M1077 422 h5 M1077 433 h5 M1077 444 h5" stroke="#1e1e1e" stroke-width="3"/>
<path d="M1085 262 Q1100 248 1141 248 L1141 457 L1101 457 L1101 262Z" fill="#2a2a2a"/>
<!-- J tall dark tower -->
<rect x="1141" y="144" width="59" height="313" fill="#242424"/>
<rect x="1160" y="144" width="2.5" height="245" fill="#4e4e4e"/>
<rect x="1172" y="144" width="2.5" height="245" fill="#4e4e4e"/>
<rect x="1182" y="144" width="2" height="245" fill="#454545"/>
<rect x="1188" y="170" width="12" height="220" fill="#303030"/>
<rect x="1180" y="144" width="20" height="26" fill="#6a6a6a"/>
<!-- K -->
<rect x="1200" y="220" width="42" height="237" fill="#363636"/>
<rect x="1200" y="186" width="42" height="34" fill="none" stroke="#3a3a3a" stroke-width="1.2"/>
<path d="M1205 186 V220 M1212 186 V220 M1219 186 V220 M1226 186 V220 M1233 186 V220 M1200 196 H1242 M1200 206 H1242" stroke="#444" stroke-width="1"/>
<!-- L -->
<rect x="1240" y="236" width="52" height="150" fill="url(#pL)"/>
<rect x="1240" y="236" width="8" height="150" fill="#4a4a4a"/>
<rect x="1262" y="250" width="10" height="135" fill="#262626"/>
<!-- M mag building -->
<path d="M1271 330 L1348 309 L1348 387 L1271 387Z" fill="#929292"/>
<path d="M1280 345 L1300 387 M1300 330 L1326 387 M1320 322 L1348 380 M1290 341 L1270 387 M1320 323 L1290 387 M1345 312 L1310 387" stroke="#7a7a7a" stroke-width="1.5"/>
<text x="1282" y="341" font-family="Liberation Sans" font-size="9" fill="#d0d0d0" transform="rotate(-4 1281 343)">MAG 2+8</text>
<!-- low building with wing -->
<rect x="1090" y="392" width="170" height="65" fill="#262626"/>
<path d="M1066 383 L1124 402 L1169 381 L1171 385 L1125 408 L1067 387Z" fill="#c8c8c8"/>
<rect x="1088" y="418" width="66" height="39" fill="#d8d8d8"/>
<rect x="1120" y="418" width="3" height="39" fill="#9a9a9a"/>
<rect x="1152" y="419" width="98" height="38" fill="#5e5e5e"/>
<rect x="1152" y="419" width="98" height="3" fill="#8a8a8a"/>
<rect x="1158" y="430" width="20" height="6" fill="#2a2a2a"/><rect x="1158" y="442" width="20" height="6" fill="#2a2a2a"/>
<rect x="1238" y="382" width="110" height="75" fill="#606060"/>
<rect x="1238" y="382" width="110" height="3" fill="#a0a0a0"/>
<rect x="1262" y="392" width="71" height="58" fill="url(#pN)"/>
<rect x="1333" y="385" width="15" height="72" fill="#a0a0a0"/>
<rect x="1245" y="450" width="103" height="7" fill="#b0b0b0"/>
<path d="M1169 381 L1262 391 L1262 399 L1150 404Z" fill="#1c1c1c"/>
<path d="M1066 383 L1124 402 L1169 381 L1171 385 L1125 408 L1067 387Z" fill="#c8c8c8"/>

<!-- ===== RIGHT STRIP ===== -->
<rect x="1236" y="457" width="112" height="469" fill="#2e2e2e"/>
<rect x="1236" y="457" width="14" height="469" fill="#3a3a3a"/>
<path d="M1238 462 h5 M1238 473 h5 M1238 484 h5 M1238 495 h5 M1238 506 h5 M1238 517 h5 M1238 528 h5 M1238 539 h5 M1238 550 h5 M1238 561 h5 M1238 572 h5 M1238 583 h5 M1238 594 h5 M1238 605 h5 M1238 616 h5 M1238 627 h5 M1238 638 h5 M1238 649 h5 M1238 660 h5 M1238 671 h5 M1238 682 h5 M1238 693 h5 M1238 704 h5 M1238 715 h5 M1238 726 h5 M1238 737 h5 M1238 748 h5 M1238 759 h5 M1238 770 h5 M1238 781 h5 M1238 792 h5 M1238 803 h5 M1238 814 h5 M1238 825 h5 M1238 836 h5 M1238 847 h5 M1238 858 h5 M1238 869 h5" stroke="#8a8a8a" stroke-width="2.5"/>
<rect x="1250" y="457" width="38" height="227" fill="url(#pS1)"/>
<rect x="1250" y="684" width="38" height="33" fill="#bebebe"/>
<rect x="1250" y="717" width="38" height="209" fill="url(#pS2)"/>
<rect x="1288" y="457" width="24" height="258" fill="url(#pK)"/>
<rect x="1288" y="715" width="24" height="211" fill="#161616"/>
<rect x="1312" y="457" width="36" height="227" fill="url(#pS3)"/>
<rect x="1312" y="684" width="36" height="33" fill="#c0c0c0"/>
<rect x="1312" y="717" width="36" height="168" fill="url(#pS4)"/>
<rect x="1295" y="880" width="53" height="46" fill="#5e5e5e"/>
<path d="M1300 890 H1348 M1300 900 H1348 M1310 880 V926 M1325 880 V926 M1340 880 V926" stroke="#8a8a8a" stroke-width="1.5"/>
<path d="M1318 926 V912 A7 7 0 0 1 1332 912 V926Z" fill="#222"/>

<!-- ===== BOTTOM STRIP ===== -->
<rect x="535" y="878" width="701" height="48" fill="#262626"/>
<rect x="535" y="896" width="92" height="4" fill="#b0b0b0"/>
<rect x="535" y="920" width="92" height="3" fill="#9a9a9a"/>
<rect x="550" y="886" width="3" height="30" fill="#5a5a5a"/><rect x="590" y="886" width="3" height="30" fill="#5a5a5a"/>
<rect x="642" y="893" width="12" height="3" fill="#9a9a9a"/><rect x="642" y="905" width="12" height="3" fill="#9a9a9a"/>
<rect x="655" y="878" width="18" height="48" fill="#5a5a5a"/>
<rect x="673" y="893" width="50" height="3" fill="#9a9a9a"/><rect x="673" y="913" width="50" height="3" fill="#9a9a9a"/>
<rect x="725" y="878" width="275" height="48" fill="url(#pBot)"/>
<rect x="800" y="885" width="130" height="38" fill="#3a3a3a" opacity=".7"/>
<path d="M805 900 H925 M805 912 H925" stroke="#6a6a6a" stroke-width="1.5"/>
<rect x="1000" y="878" width="123" height="48" fill="#b4b4b4"/>
<path d="M1070 878 Q1110 890 1122 926 L1095 926 Q1085 895 1060 885Z" fill="#6a6a6a"/>
<rect x="1005" y="882" width="4" height="14" fill="#8a8a8a"/><rect x="1015" y="882" width="4" height="14" fill="#8a8a8a"/><rect x="1030" y="882" width="4" height="14" fill="#8a8a8a"/>
<rect x="1123" y="878" width="77" height="48" fill="#8a8a8a"/>
<rect x="1200" y="878" width="36" height="48" fill="#262626"/>
</g></svg>

<div class="a" style="left:535px;top:457px;width:701px;height:421px;background:#ffe800"></div>
<div class="a" style="left:612.5px;top:504px;font-size:62px;line-height:66px;color:#000;transform:scaleX(0.893);transform-origin:0 0;-webkit-text-stroke:2.3px #000">ANNUAL</div><div class="a" style="left:611px;top:570px;font-size:62px;line-height:66px;color:#000;transform:scaleX(0.874);transform-origin:0 0;-webkit-text-stroke:2.3px #000">REPORT</div>
<div class="a" style="left:613px;top:718px;font-size:14.4px;line-height:17px;font-weight:bold;color:#111">VanArsdel, Ltd.</div>
<svg class="a" style="left:613px;top:732px" width="72" height="4" viewBox="0 0 72 4"><path d="M0 2.5 Q1.5 0.5 3 2.5 T6 2.5 T9 2.5 T12 2.5 T15 2.5 T18 2.5 T21 2.5 T24 2.5 T27 2.5 T30 2.5 T33 2.5 T36 2.5 T39 2.5 T42 2.5 T45 2.5 T48 2.5 T51 2.5 T54 2.5 T57 2.5 T60 2.5 T63 2.5 T66 2.5 T69 2.5 T72 2.5" fill="none" stroke="#e0281e" stroke-width="0.9"/></svg>
<div class="a" style="left:613px;top:771px;font-size:14.5px;line-height:23px;color:#111;letter-spacing:0.1px">Prepared by<br>Seyhan Can</div>
<div class="a" style="left:813px;top:771px;font-size:14.5px;line-height:23px;color:#111;letter-spacing:0.63px">5678 Mountain Drive,<br>Denver, CO 12345</div>
<div class="a" style="left:1013px;top:771px;font-size:14.5px;line-height:23px;color:#111;letter-spacing:1.15px">219-555-0148</div><div class="a" style="left:1013px;top:794px;font-size:14.5px;line-height:23px;color:#111;letter-spacing:0.43px">www.vanarsdelltd.com</div>

<!-- ===== ADD-IN PANEL ===== -->
<div class="a" style="left:1527px;top:119px;width:369px;height:507px;background:#fff;box-shadow:0 2px 8px rgba(0,0,0,.16);border-radius:2px"></div>
<div class="a" style="left:1896px;top:130px;width:1px;height:278px;background:#616161"></div>
<div class="a" style="left:1546px;top:141px;width:331px;height:32px;border:1px solid #d1d1d1;border-bottom-color:#616161;border-radius:4px"></div>
<div class="a" style="left:1700px;top:170px;width:23px;height:2px;background:#0f6cbd"></div>
<svg class="a" style="left:1556px;top:149px" width="17" height="16" viewBox="0 0 17 16"><circle cx="6.6" cy="6.6" r="5.6" fill="none" stroke="#424242" stroke-width="1.1"/><path d="M10.7 10.7 L15.5 15.3" stroke="#424242" stroke-width="1.2"/></svg>
<div class="a" style="left:1581px;top:150px;font-size:13.5px;line-height:16px;color:#242424">circu</div>
<div class="a" style="left:1610px;top:147px;width:1px;height:19px;background:#000"></div>
<svg class="a" style="left:1851px;top:151px" width="13" height="13" viewBox="0 0 13 13"><path d="M1 1 L12 12 M12 1 L1 12" stroke="#424242" stroke-width="1.1"/></svg>
<div class="a" style="left:1547px;top:201px;font-size:14px;line-height:16px;color:#242424;-webkit-text-stroke:0.35px #242424">More search results</div>

<div class="a" style="left:1533px;top:223px;width:356px;height:74px;border:4px solid #0aa0fa;border-radius:2px"></div>
<!-- row 1 -->
<div class="a" style="left:1554px;top:241px;width:38px;height:38px;border:1px solid #c8c8c8;border-radius:4px;background:#fff"></div>
<svg class="a" style="left:1562px;top:249px" width="22" height="22" viewBox="0 0 22 22"><circle cx="11" cy="11" r="10" fill="#1e0b8f"/><g fill="#fff"><circle cx="8" cy="8.4" r="2.5"/><circle cx="14" cy="8.4" r="2.5"/><circle cx="8" cy="14.2" r="2.5"/><circle cx="14" cy="14.2" r="2.5"/></g><circle cx="11" cy="11.3" r="1.6" fill="#1e0b8f"/><circle cx="11" cy="11.3" r="0.7" fill="#fff"/></svg>
<div class="a" style="left:1602px;top:236px;font-size:13.3px;line-height:15px;color:#323130;-webkit-text-stroke:0.3px #323130">Circularo for Office 365</div>
<div class="a" style="left:1602px;top:253px;font-size:12px;line-height:15px;color:#242424">Streamline your document workflow ...</div>
<div class="a" style="left:1602px;top:269px;font-size:11px;line-height:14px;color:#2b579a">Terms &amp; Conditions</div>
<div class="a" style="left:1823px;top:247px;width:41px;height:27px;border:1px solid #d1d1d1;border-radius:3px;background:#fff;font-size:11px;line-height:25px;text-align:center;font-weight:bold;color:#242424">Add</div>
<!-- row 2 -->
<div class="a" style="left:1554px;top:310px;width:38px;height:38px;border:1px solid #c8c8c8;border-radius:4px;background:#fff"></div>
<svg class="a" style="left:1555px;top:311px" width="36" height="36" viewBox="0 0 36 36">
 <text x="6.6" y="14.2" font-family="Liberation Serif" font-size="8.5" font-weight="bold" fill="#55a8f5">H</text>
 <text x="12" y="16.3" font-family="Liberation Serif" font-size="9" font-weight="bold" fill="#b070e8">O</text>
 <text x="19.3" y="13.8" font-family="Liberation Serif" font-size="8" font-weight="bold" fill="#f0509a">I</text>
 <text x="22" y="17.5" font-family="Liberation Serif" font-size="8" font-weight="bold" fill="#f59a70">A</text>
 <text x="6.8" y="26.3" font-family="Liberation Serif" font-size="10" font-weight="bold" fill="#111">T</text>
 <text x="13.3" y="29" font-family="Liberation Serif" font-size="10" font-weight="bold" fill="#111">E</text>
 <text x="20.3" y="26.3" font-family="Liberation Serif" font-size="10" font-weight="bold" fill="#111">X</text>
</svg>
<div class="a" style="left:1602px;top:305px;font-size:13.3px;line-height:15px;color:#323130;-webkit-text-stroke:0.3px #323130">HoLaTeX</div>
<div class="a" style="left:1602px;top:322px;font-size:12px;line-height:15px;color:#242424">Add LaTeX Math formula or TikZ/PG...</div>
<div class="a" style="left:1602px;top:338px;font-size:11px;line-height:14px;color:#2b579a">Terms &amp; Conditions</div>
<div class="a" style="left:1823px;top:316px;width:41px;height:27px;border:1px solid #d1d1d1;border-radius:3px;background:#fff;font-size:11px;line-height:25px;text-align:center;font-weight:bold;color:#242424">Add</div>
<!-- row 3 -->
<div class="a" style="left:1554px;top:379px;width:38px;height:38px;border:1px solid #c8c8c8;border-radius:4px;background:#fff"></div>
<svg class="a" style="left:1554px;top:379px" width="38" height="38" viewBox="0 0 38 38">
 <rect x="7" y="7.2" width="24.3" height="6.4" rx="3.2" fill="#7b5cf5"/>
 <rect x="7" y="15.5" width="24.3" height="6.4" rx="3.2" fill="#7b5cf5"/>
 <rect x="7" y="24" width="16.2" height="6.6" rx="3.3" fill="#7b5cf5"/>
 <circle cx="27.7" cy="27.5" r="3.3" fill="#000"/>
</svg>
<div class="a" style="left:1602px;top:374px;font-size:13.3px;line-height:15px;color:#323130;-webkit-text-stroke:0.3px #323130">Gavel</div>
<div class="a" style="left:1602px;top:391px;font-size:12px;line-height:15px;color:#242424">Document automation software to cu...</div>
<div class="a" style="left:1602px;top:407px;font-size:11px;line-height:14px;color:#2b579a">Terms &amp; Conditions</div>
<div class="a" style="left:1823px;top:385px;width:41px;height:27px;border:1px solid #d1d1d1;border-radius:3px;background:#fff;font-size:11px;line-height:25px;text-align:center;font-weight:bold;color:#242424">Add</div>

<div class="a" style="left:1546px;top:555px;width:331px;height:1px;background:#c8c8c8"></div>
<div class="a" style="left:1547px;top:585px;font-size:12.6px;line-height:15px;color:#1f5fbf;letter-spacing:-0.3px">Advanced...</div>
<div class="a" style="left:1744px;top:575px;width:133px;height:34px;border:1px solid #d1d1d1;border-radius:4px;background:#fff"></div>
<svg class="a" style="left:1757px;top:584px" width="15" height="15" viewBox="0 0 15 15"><rect x="1" y="1" width="12.5" height="12.5" rx="2.2" fill="none" stroke="#242424" stroke-width="1.1"/><path d="M7.25 4 V10.5 M4 7.25 H10.5" stroke="#242424" stroke-width="1.1"/></svg>
<div class="a" style="left:1779px;top:585px;font-size:13.7px;line-height:15px;color:#242424;-webkit-text-stroke:0.35px #242424">More Add-ins</div>

<!-- arrow -->
<svg class="a" style="left:1430px;top:245px" width="110" height="30" viewBox="0 0 110 30"><path d="M9.5 20.5 L80 14.5" stroke="#0aa0fa" stroke-width="4" stroke-linecap="round"/><path d="M78 6 L103 14.5 L79 23Z" fill="#0aa0fa"/></svg>


<!-- ===== STATUS BAR ===== -->
<div class="a" style="left:0;top:926px;width:1904px;height:25px;background:#f5f5f5;border-top:1px solid #e0e0e0"></div>
<div class="a" style="left:17px;top:933px;font-size:11.6px;line-height:14px;color:#424242">Page 1 of 2</div>
<div class="a" style="left:87px;top:933px;font-size:11.6px;line-height:14px;color:#424242">295 words</div>
<div class="a" style="left:152px;top:933px;font-size:11.6px;line-height:14px;color:#424242">English (U.S.)</div>
<div class="a" style="left:229px;top:933px;font-size:11.6px;line-height:14px;color:#424242">Text Predictions: On</div>
<div class="a" style="left:344px;top:933px;font-size:11.6px;line-height:14px;color:#424242">Editor Suggestions: Showing</div>
<div class="a" style="left:1412px;top:927px;width:40px;height:24px;background:#d6d6d6;border:1px solid #616161;border-radius:4px"></div>
<svg class="a" style="left:1426px;top:932px" width="12" height="14" viewBox="0 0 12 14"><path d="M1.5 1.5 H7 L10.5 5 V12.5 H1.5Z M7 1.5 V5 H10.5" fill="none" stroke="#424242" stroke-width="1"/></svg>
<div class="a" style="left:1466px;top:939px;width:11px;height:1px;background:#424242"></div>
<div class="a" style="left:1500px;top:938px;width:20px;height:2px;background:#1a5dc7"></div>
<div class="a" style="left:1526px;top:938px;width:87px;height:2px;background:#616161"></div>
<div class="a" style="left:1518px;top:931px;width:15px;height:15px;border-radius:50%;background:#1a5dc7;border:2px solid #fff;box-shadow:0 0 0 1px #d6d6d6"></div>
<div class="a" style="left:1635px;top:939px;width:11px;height:1px;background:#424242"></div>
<div class="a" style="left:1640px;top:934px;width:1px;height:11px;background:#424242"></div>
<div class="a" style="left:1667px;top:933px;font-size:11.6px;line-height:14px;color:#424242">100%</div>
<svg class="a" style="left:1703px;top:934px" width="12" height="11" viewBox="0 0 12 11"><path d="M1 5 V1 H11 V5" fill="none" stroke="#424242" stroke-width="1"/><path d="M1 9 H4 M8 9 H11 M2.5 7.5 L1 9 L2.5 10.5 M9.5 7.5 L11 9 L9.5 10.5" fill="none" stroke="#424242" stroke-width="1"/></svg>
<div class="a" style="left:1720px;top:933px;font-size:11.6px;line-height:14px;color:#424242">Fit</div>
<div class="a" style="left:1743px;top:933px;font-size:11.6px;line-height:14px;color:#424242">Give Feedback to Microsoft</div>


</body></html>
